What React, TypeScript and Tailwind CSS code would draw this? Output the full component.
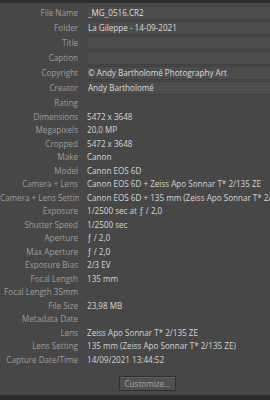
import React from "react";

type Row = {
  label: string;
  value?: string;
  action?: "list" | "arrow";
};

const editable: Row[] = [
  { label: "File Name", value: "_MG_0516.CR2", action: "list" },
  { label: "Folder", value: "La Gileppe - 14-09-2021", action: "arrow" },
  { label: "Title" },
  { label: "Caption" },
  { label: "Copyright", value: "© Andy Bartholomé Photography Art" },
  { label: "Creator", value: "Andy Bartholomé" },
];

const info: Row[] = [
  { label: "Rating" },
  { label: "Dimensions", value: "5472 x 3648" },
  { label: "Megapixels", value: "20,0 MP" },
  { label: "Cropped", value: "5472 x 3648", action: "arrow" },
  { label: "Make", value: "Canon" },
  { label: "Model", value: "Canon EOS 6D" },
  { label: "Camera + Lens", value: "Canon EOS 6D + Zeiss Apo Sonnar T* 2/135 ZE" },
  { label: "Camera + Lens Setting", value: "Canon EOS 6D + 135 mm (Zeiss Apo Sonnar T* 2/135 ZE)" },
  { label: "Exposure", value: "1/2500 sec at ƒ / 2,0" },
  { label: "Shutter Speed", value: "1/2500 sec" },
  { label: "Aperture", value: "ƒ / 2,0", action: "arrow" },
  { label: "Max Aperture", value: "ƒ / 2,0", action: "arrow" },
  { label: "Exposure Bias", value: "2/3 EV" },
  { label: "Focal Length", value: "135 mm" },
  { label: "Focal Length 35mm" },
  { label: "File Size", value: "23,98 MB" },
  { label: "Metadata Date" },
  { label: "Lens", value: "Zeiss Apo Sonnar T* 2/135 ZE", action: "arrow" },
  { label: "Lens Setting", value: "135 mm (Zeiss Apo Sonnar T* 2/135 ZE)" },
  { label: "Capture Date/Time", value: "14/09/2021 13:44:52", action: "arrow" },
];

const ActionButton = ({ kind }: { kind: "list" | "arrow" }) => (
  <div className="w-[10px] h-[10px] shrink-0 bg-[#5b5b5b] border border-[#6a6a6a] flex items-center justify-center">
    <svg width="8" height="6" viewBox="0 0 8 6" fill="none" stroke="#a8a8a8" strokeWidth="1">
      {kind === "list" ? (
        <path d="M1 1h6M1 3h6M1 5h6" />
      ) : (
        <>
          <path d="M0.5 3.5h5.5" />
          <path d="M4.5 2l1.5 1.5L4.5 5" />
        </>
      )}
    </svg>
  </div>
);

const Label = ({ text }: { text: string }) => (
  <div className="w-[79px] shrink-0 text-right text-[#9d9d9d] whitespace-nowrap overflow-hidden pr-[1px] leading-[13px]">
    {text}
  </div>
);

export default function App() {
  return (
    <div
      className="w-[270px] h-[400px] bg-[#474747] flex flex-col overflow-hidden text-[8.1px] leading-[13px]"
      style={{ fontFamily: "'Open Sans', 'Noto Sans', sans-serif" }}
    >
      <div className="h-[3px] bg-[#2e2e2e] shrink-0" />
      <div className="flex flex-1 min-h-0">
        <div className="flex-1 flex flex-col pt-[2px]">
          {editable.map((r) => (
            <div key={r.label} className="h-[15px] flex items-center">
              <Label text={r.label} />
              <div className="flex-1 flex items-center gap-[1px] ml-[7px] mr-[2px] h-[14px]">
                <div className="flex-1 h-full bg-[#4c4c4c] border border-[#404040] flex items-center px-[1px] text-[#dcdcdc] whitespace-nowrap overflow-hidden leading-[12px]">
                  {r.value}
                </div>
                {r.action && <ActionButton kind={r.action} />}
              </div>
            </div>
          ))}
          <div className="h-[1px]" />
          {info.map((r) => (
            <div key={r.label} className="h-[13.5px] flex items-center">
              <Label text={r.label} />
              <div className="flex-1 min-w-0 flex items-center ml-[8px] mr-[2px]">
                <div className="flex-1 min-w-0 text-[#d6d6d6] whitespace-nowrap overflow-hidden leading-[13px]">
                  {r.value}
                </div>
                {r.action && <ActionButton kind={r.action} />}
              </div>
            </div>
          ))}
          <div className="flex justify-center pt-[10px] pr-[6px]">
            <button className="w-[57px] h-[15px] bg-[#505050] border border-[#2f2f2f] rounded-[1px] text-[#a6a6a6] text-[8.1px] leading-[13px] shadow-[inset_0_1px_0_#5e5e5e]">
              Customize...
            </button>
          </div>
        </div>
        <div className="w-[2px] bg-[#252525] shrink-0" />
        <div className="w-[6px] bg-[#3f3f3f] shrink-0" />
      </div>
      <div className="h-[5px] bg-[#2b2b2b] shrink-0" />
    </div>
  );
}
